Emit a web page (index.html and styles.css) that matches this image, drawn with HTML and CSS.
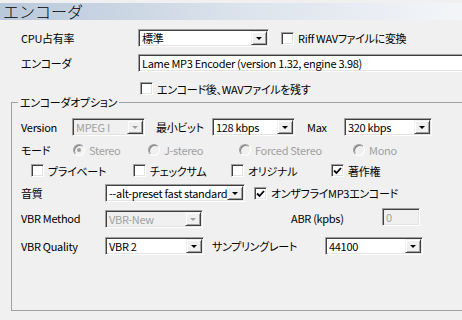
FILE: index.html
```html
<!DOCTYPE html>
<html lang="ja">
  <head>
    <meta charset="UTF-8" />
    <title>エンコーダ</title>
    <link rel="stylesheet" href="styles.css">
  </head>
  <body>
    <div class="page-title">エンコーダ</div>

    <div class="top">
      <div class="row row-cpu">
        <span class="label w-top">CPU占有率</span>
        <div class="combo w-cpu"><span class="value">標準</span><span class="drop"></span></div>
        <label class="check ml-riff"><span class="box"></span>Riff WAVファイルに変換</label>
      </div>
      <div class="row row-enc">
        <span class="label w-top">エンコーダ</span>
        <div class="edit w-enc">Lame MP3 Encoder (version 1.32, engine 3.98)</div>
      </div>
      <div class="row row-keep">
        <label class="check ml-keep"><span class="box"></span>エンコード後、WAVファイルを残す</label>
      </div>
    </div>

    <div class="group">
      <div class="group-title">エンコーダオプション</div>

      <!-- version / bitrate -->
      <div class="row row-ver">
        <span class="label w-ver">Version</span>
        <div class="combo disabled w-mpeg"><span class="value">MPEG I</span><span class="drop"></span></div>
        <span class="label w-minbit">最小ビット</span>
        <div class="combo w-min"><span class="value">128 kbps</span><span class="drop"></span></div>
        <span class="label w-max">Max</span>
        <div class="combo w-maxc"><span class="value">320 kbps</span><span class="drop"></span></div>
      </div>

      <!-- mode -->
      <div class="row row-mode">
        <span class="label w-mode">モード</span>
        <label class="radio disabled w-r1"><span class="dot on"></span>Stereo</label>
        <label class="radio disabled w-r2"><span class="dot"></span>J-stereo</label>
        <label class="radio disabled w-r3"><span class="dot"></span>Forced Stereo</label>
        <label class="radio disabled"><span class="dot"></span>Mono</label>
      </div>

      <!-- flags -->
      <div class="row row-flags">
        <label class="check w-f1"><span class="box"></span>プライベート</label>
        <label class="check w-f2"><span class="box"></span>チェックサム</label>
        <label class="check w-f3"><span class="box"></span>オリジナル</label>
        <label class="check"><span class="box"><svg viewBox="0 0 9 9" width="9" height="9"><path d="M1 4.5 L3.5 7 L8 2" fill="none" stroke="#000" stroke-width="1.8"/></svg></span>著作権</label>
      </div>

      <!-- quality -->
      <div class="row row-quality">
        <span class="label w-lbl">音質</span>
        <div class="combo w-preset"><span class="value">--alt-preset fast standard</span><span class="drop"></span></div>
        <label class="check ml-fly"><span class="box"><svg viewBox="0 0 9 9" width="9" height="9"><path d="M1 4.5 L3.5 7 L8 2" fill="none" stroke="#000" stroke-width="1.8"/></svg></span>オンザフライMP3エンコード</label>
      </div>

      <!-- vbr method / abr -->
      <div class="row row-method">
        <span class="label w-lbl">VBR Method</span>
        <div class="combo disabled w-method"><span class="value">VBR-New</span><span class="drop"></span></div>
        <span class="label w-abr">ABR (kpbs)</span>
        <div class="edit disabled w-abrbox">0</div>
      </div>

      <!-- vbr quality / sampling -->
      <div class="row row-vbrq">
        <span class="label w-lbl">VBR Quality</span>
        <div class="combo w-vbrq"><span class="value">VBR 2</span><span class="drop"></span></div>
        <span class="label w-rate">サンプリングレート</span>
        <div class="combo w-ratec"><span class="value">44100</span><span class="drop"></span></div>
      </div>
    </div>
  </body>
</html>
```

FILE: styles.css
```css
* {
  box-sizing: border-box;
  margin: 0;
  padding: 0;
}

body {
  width: 462px;
  height: 320px;
  overflow: hidden;
  background: #f0f0f0;
  color: #000;
  font-family: "Noto Sans CJK JP", "Liberation Sans", sans-serif;
  font-size: 11px;
  letter-spacing: -0.3px;
  font-feature-settings: "palt";
}

.page-title {
  margin-top: 3px;
  height: 17px;
  padding-left: 3px;
  font-size: 16px;
  font-weight: 300;
  line-height: 17px;
  letter-spacing: 0;
  font-feature-settings: normal;
  background: linear-gradient(90deg, #b9c8da, #dde4ed 55%, #f3f5f8);
}

/* rows */
.row {
  display: flex;
  align-items: center;
  white-space: nowrap;
}

.label {
  flex: none;
  line-height: 16px;
}

.top {
  padding-left: 21px;
}

.row-cpu { margin-top: 9px; height: 18px; }
.row-enc { margin-top: 7px; height: 18px; }
.row-keep { margin-top: 10px; height: 13px; }

.w-top { width: 117px; }
.w-cpu { width: 131px; }
.ml-riff { margin-left: 12px; }
.w-enc { width: 340px; }
.ml-keep { margin-left: 119px; }

/* group box */
.group {
  margin: 7px 0 0 11px;
  width: 470px;
  height: 209px;
  border: 1px solid #a0a0a0;
  border-right: none;
  padding-left: 9px;
}

.group-title {
  display: table;
  margin: -8px 0 0 -3px;
  padding: 0 2px;
  line-height: 14px;
  background: #f0f0f0;
}

.row-ver { margin-top: 9px; height: 18px; }
.row-mode { margin-top: 7px; height: 14px; }
.row-flags { margin-top: 7px; height: 13px; padding-left: 10px; }
.row-quality { margin-top: 7px; height: 18px; }
.row-method { margin-top: 6px; height: 20px; }
.row-vbrq { margin-top: 9px; height: 18px; }

.w-ver { width: 51px; }
.w-mpeg { width: 73px; }
.w-minbit { width: 56px; margin-left: 11px; }
.w-min { width: 83px; }
.w-max { width: 37px; margin-left: 12px; }
.w-maxc { width: 88px; }

.w-mode { width: 52px; }
.w-r1 { width: 75px; }
.w-r2 { width: 91px; }
.w-r3 { width: 114px; }

.w-f1 { width: 102px; }
.w-f2 { width: 98px; }
.w-f3 { width: 100px; }

.w-lbl { width: 84px; }
.w-preset { width: 140px; }
.ml-fly { margin-left: 9px; }
.w-method { width: 98px; align-self: flex-end; height: 17px; }
.w-abr { width: 91px; margin-left: 88px; }
.w-abrbox { width: 38px; height: 17px; align-self: flex-start; }
.w-vbrq { width: 99px; }
.w-rate { width: 113px; margin-left: 8px; }
.w-ratec { width: 98px; }

/* sunken controls */
.combo,
.edit {
  flex: none;
  display: flex;
  align-items: center;
  height: 18px;
  background: #fff;
  border: 1px solid;
  border-color: #a0a0a0 #fff #fff #a0a0a0;
  box-shadow: inset 1px 1px #404040, inset -1px -1px #e3e3e3;
  overflow: hidden;
}

.combo .value,
.edit {
  padding-left: 3px;
  line-height: 16px;
}

.combo .value {
  flex: 1;
  overflow: hidden;
}

.combo.disabled,
.edit.disabled {
  background: #f0f0f0;
  color: #a0a0a0;
}

.drop {
  flex: none;
  position: relative;
  width: 16px;
  height: 14px;
  margin-right: 1px;
  background: #f0f0f0;
  border: 1px solid;
  border-color: #f0f0f0 #404040 #404040 #f0f0f0;
  box-shadow: inset 1px 1px #fff, inset -1px -1px #a0a0a0;
}

.drop::after {
  content: "";
  position: absolute;
  left: 4px;
  top: 5px;
  border-left: 3px solid transparent;
  border-right: 3px solid transparent;
  border-top: 3px solid #000;
}

.disabled .drop::after {
  border-top-color: #a0a0a0;
}

/* check boxes */
.check,
.radio {
  flex: none;
  display: flex;
  align-items: center;
  line-height: 16px;
}

.box {
  flex: none;
  display: flex;
  align-items: center;
  justify-content: center;
  width: 13px;
  height: 13px;
  margin-right: 4px;
  background: #fff;
  border: 1px solid;
  border-color: #a0a0a0 #fff #fff #a0a0a0;
  box-shadow: inset 1px 1px #404040, inset -1px -1px #e3e3e3;
}

/* radio buttons */
.radio.disabled {
  color: #a0a0a0;
}

.dot {
  flex: none;
  position: relative;
  width: 12px;
  height: 12px;
  margin-right: 4px;
  border-radius: 50%;
  border: 1px solid;
  border-color: #a0a0a0 #fff #fff #a0a0a0;
  box-shadow: inset 1px 1px #808080;
  background: #f0f0f0;
}

.dot.on::after {
  content: "";
  position: absolute;
  left: 3px;
  top: 3px;
  width: 4px;
  height: 4px;
  border-radius: 50%;
  background: #a0a0a0;
}
```
